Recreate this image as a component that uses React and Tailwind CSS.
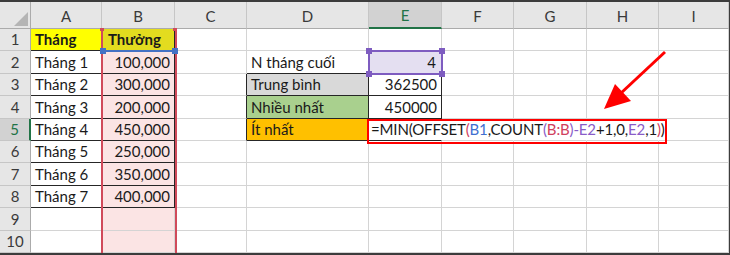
import React from 'react';

const cols = ['A', 'B', 'C', 'D', 'E', 'F', 'G', 'H', 'I'];

const R = {
  grid: 'border-r border-r-[#d4d4d4]',
  dark: 'border-r border-r-[#262626]',
  none: 'border-r border-r-transparent',
};
const B = {
  grid: 'border-b border-b-[#d4d4d4]',
  dark: 'border-b border-b-[#262626]',
};

const values = ['100,000', '300,000', '200,000', '450,000', '250,000', '350,000', '400,000'];

function Formula() {
  return (
    <span className="whitespace-nowrap tracking-[-0.15px]">
      =MIN(OFFSET<span className="text-[#d0405e]">(</span>
      <span className="text-[#3f6fd0]">B1</span>,COUNT<span className="text-[#8a5cc8]">(</span>
      <span className="text-[#d0405e]">B:B</span>
      <span className="text-[#8a5cc8]">)</span>
      <span className="text-[#8a5cc8]">-E2</span>+1,0,<span className="text-[#8a5cc8]">E2</span>,1
      <span className="text-[#d0405e]">)</span>)
    </span>
  );
}

function cellProps(r, c) {
  // r: 1..10, c: index in cols
  const col = cols[c];
  let right = 'grid';
  let bottom = 'grid';
  let bg = '';
  let content = null;
  let align = 'justify-start pl-[4px]';
  let bold = false;

  if ((col === 'A' || col === 'B') && r <= 8) {
    right = 'dark';
    bottom = 'dark';
  }
  if (col === 'C' && r >= 3 && r <= 5) right = 'dark';
  if (col === 'D' && r >= 3 && r <= 5) right = 'dark';
  if (col === 'E' && r >= 3 && r <= 4) right = 'dark';
  if ((col === 'D' || col === 'E') && r >= 2 && r <= 5) bottom = 'dark';
  if (r === 5 && ['E', 'F', 'G', 'H'].includes(col)) right = 'none';

  if (col === 'B' && r >= 2) bg = 'bg-[#fbe4e4]';

  if (col === 'A') {
    if (r === 1) {
      bg = 'bg-[#ffff00]';
      content = 'Tháng';
      bold = true;
    } else if (r <= 8) content = `Tháng ${r - 1}`;
  }
  if (col === 'B') {
    if (r === 1) {
      bg = 'bg-[#e3dc1f]';
      content = 'Thưởng';
      bold = true;
      align = 'justify-start pl-[6px]';
    } else if (r <= 8) {
      content = values[r - 2];
      align = 'justify-end pr-[4px]';
    }
  }
  if (col === 'D') {
    if (r === 2) content = 'N tháng cuối';
    if (r === 3) {
      content = 'Trung bình';
      bg = 'bg-[#d9d9d9]';
    }
    if (r === 4) {
      content = 'Nhiều nhất';
      bg = 'bg-[#a9d08e]';
    }
    if (r === 5) {
      content = 'Ít nhất';
      bg = 'bg-[#ffc000]';
    }
  }
  if (col === 'E') {
    if (r === 2) {
      content = '4';
      bg = 'bg-[#e4dff1]';
      align = 'justify-end pr-[5px]';
    }
    if (r === 3) {
      content = '362500';
      align = 'justify-end pr-[4px]';
    }
    if (r === 4) {
      content = '450000';
      align = 'justify-end pr-[4px]';
    }
    if (r === 5) {
      content = <Formula />;
      align = 'justify-start pl-[2px] relative z-10 overflow-visible';
    }
  }
  return { right, bottom, bg, content, align, bold };
}

export default function App() {
  const rows = Array.from({ length: 10 }, (_, i) => i + 1);
  return (
    <div
      className="w-[730px] h-[255px] bg-white border-t-2 border-r border-b-2 border-[#3c3c3c] overflow-hidden text-[15px] text-[#1a1a1a]"
      style={{ fontFamily: 'Lato, "Liberation Sans", sans-serif' }}
    >
      <div className="relative grid grid-cols-[31px_71px_73px_72px_122px_73px_72px_73px_72px_70px] grid-rows-[27px_repeat(10,22.4px)]">
        {/* corner */}
        <div className="relative bg-[#e6e6e6] border-r border-b border-[#ababab]">
          <svg className="absolute left-0 top-0" width="31" height="27">
            <polygon points="28,10 28,24 14,24" fill="#b5b5b5" />
          </svg>
        </div>
        {cols.map((c) => (
          <div
            key={c}
            className={
              c === 'E'
                ? 'flex items-center justify-center bg-[#d2d2d2] border-r border-r-[#c6c6c6] border-b-2 border-b-[#217346] text-[#217346] pt-[2px]'
                : 'flex items-center justify-center bg-[#e6e6e6] border-r border-r-[#c6c6c6] border-b border-b-[#ababab] text-[#3a3a3a] pt-[2px]'
            }
          >
            {c}
          </div>
        ))}
        {rows.map((r) => (
          <React.Fragment key={r}>
            <div
              className={
                r === 5
                  ? 'flex items-end justify-center leading-[21px] bg-[#d2d2d2] border-r-2 border-r-[#217346] border-b border-b-[#c6c6c6] text-[#217346]'
                  : 'flex items-end justify-center leading-[21px] bg-[#e6e6e6] border-r border-r-[#ababab] border-b border-b-[#c6c6c6] text-[#3a3a3a]'
              }
            >
              {r}
            </div>
            {cols.map((c, ci) => {
              const p = cellProps(r, ci);
              return (
                <div
                  key={c}
                  className={`flex items-end leading-[21px] whitespace-nowrap ${R[p.right]} ${B[p.bottom]} ${p.bg} ${p.align} ${p.bold ? 'font-bold' : ''}`}
                >
                  {p.content}
                </div>
              );
            })}
          </React.Fragment>
        ))}

        {/* column B range highlight (red) */}
        <div className="absolute left-[101px] top-[27px] bottom-0 w-[76px] border-x-2 border-[#d04a5a] pointer-events-none" />
        <div className="absolute left-[100px] top-[26px] w-[4px] h-[3px] bg-[#d04a5a]" />
        <div className="absolute left-[173px] top-[26px] w-[4px] h-[3px] bg-[#d04a5a]" />

        {/* B1 blue reference */}
        <div className="absolute left-[102px] top-[48px] w-[74px] h-[2px] bg-[#4472c4]" />
        <div className="absolute left-[100px] top-[46px] w-[6px] h-[6px] bg-[#4472c4]" />
        <div className="absolute left-[172px] top-[46px] w-[6px] h-[6px] bg-[#4472c4]" />

        {/* E2 purple reference */}
        <div className="absolute left-[368px] top-[48px] w-[75px] h-[25px] border-2 border-[#7e5cc0]" />
        <div className="absolute left-[366px] top-[46px] w-[6px] h-[6px] bg-[#7e5cc0]" />
        <div className="absolute left-[439px] top-[46px] w-[6px] h-[6px] bg-[#7e5cc0]" />
        <div className="absolute left-[366px] top-[69px] w-[6px] h-[6px] bg-[#7e5cc0]" />
        <div className="absolute left-[439px] top-[69px] w-[6px] h-[6px] bg-[#7e5cc0]" />

        {/* red frame around formula */}
        <div className="absolute left-[367px] top-[117px] w-[300px] h-[25px] border-2 border-[#ff0000] z-20" />

        {/* red arrow */}
        <svg className="absolute left-0 top-0 z-20 pointer-events-none" width="729" height="251">
          <line x1="665" y1="50" x2="620" y2="92" stroke="#ff0000" strokeWidth="3" />
          <polygon points="604,107 615,82 631,99" fill="#ff0000" />
        </svg>
      </div>
    </div>
  );
}
